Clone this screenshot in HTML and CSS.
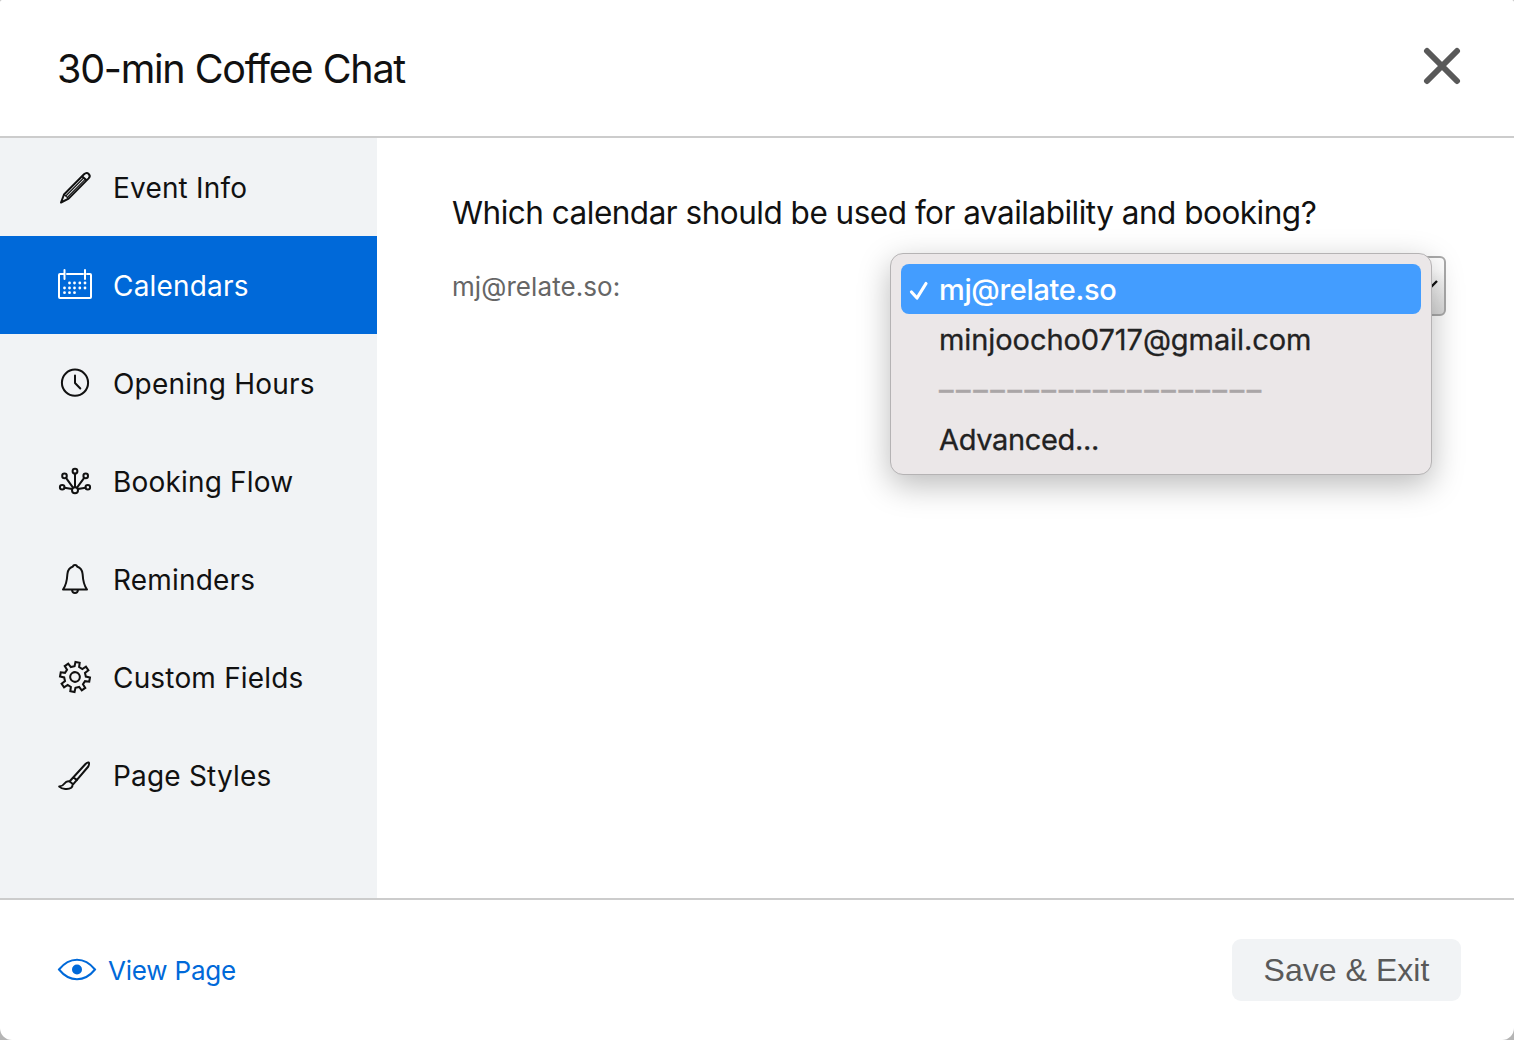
FILE: index.html
```html
<!DOCTYPE html>
<html lang="en">
<head>
<meta charset="utf-8">
<title>30-min Coffee Chat</title>
<link rel="stylesheet" href="styles.css">
</head>
<body>
<div class="dialog">
  <header class="header">
    <h1 class="title">30-min Coffee Chat</h1>
    <button class="close" aria-label="Close"><svg width="38" height="38" viewBox="0 0 38 38"><path d="M4 4L34 34M34 4L4 34"/></svg></button>
  </header>
  <div class="body">
    <nav class="nav">
      <a class="item"><svg class="icon" viewBox="0 0 36 36"><path d="M4 33.500L7 25.500L27 5.300C28.500 3.900 30.200 3.500 31.700 4.900S33 7.900 31.600 9.400L11.600 29.600Z M25 7.300L29.600 11.300"/><path class="fine" d="M7 25.500L11.600 29.600M8.800 27L26.600 9M10.300 28.500L28.200 10.400"/></svg><span>Event Info</span></a>
      <a class="item active"><svg class="icon" viewBox="0 0 36 36"><path d="M7 7H3Q2 7 2 8V30Q2 31 3 31H33Q34 31 34 30V8Q34 7 33 7H30M10 7H26M7.500 3V12M28 3V12"/><path class="dots" d="M12.500 16h.01M17.500 16h.01M22.800 16h.01M28 16h.01M7.500 21h.01M12.500 21h.01M17.500 21h.01M22.800 21h.01M28 21h.01M7.500 25.700h.01M12.500 25.700h.01M17.500 25.700h.01"/></svg><span>Calendars</span></a>
      <a class="item"><svg class="icon" viewBox="0 0 36 36"><circle cx="18" cy="17.700" r="13.100"/><path d="M18 10.500V18L23.300 23.500"/></svg><span>Opening Hours</span></a>
      <a class="item"><svg class="icon" viewBox="0 0 36 36"><circle cx="18" cy="8.200" r="2.400"/><circle cx="7.500" cy="12.900" r="2.300"/><circle cx="28.700" cy="12.900" r="2.300"/><circle cx="5.200" cy="24.300" r="2.300"/><circle cx="30.800" cy="24.300" r="2.300"/><circle cx="18" cy="27.200" r="3"/><path d="M18 10.700V24.200M9 14.900L16 24.700M27.200 14.900L20 24.700M7.500 24.700L15 26.100M28.500 24.700L21 26.100"/></svg><span>Booking Flow</span></a>
      <a class="item"><svg class="icon" viewBox="0 0 36 36"><path d="M16 5.500Q16 4 18 4T20 5.500Q25 7 25.600 13C26 20 26.500 24 30 28.500H6C9.500 24 10 20 10.400 13Q11 7 16 5.500ZM15 29Q15.300 32 18 32T21 29"/></svg><span>Reminders</span></a>
      <a class="item"><svg class="icon gear" viewBox="0 0 36 36"><g transform="translate(18 18) rotate(10) scale(.97)"><circle r="5"/><path d="M-2.400 -10.900L-2.200 -15.300H2.200L2.400 -10.900L6 -9.400L9.260 -12.370L12.370 -9.260L9.400 -6L10.900 -2.400L15.300 -2.200V2.200L10.900 2.400L9.400 6L12.370 9.260L9.260 12.370L6 9.400L2.400 10.900L2.200 15.300H-2.200L-2.400 10.900L-6 9.400L-9.260 12.370L-12.370 9.260L-9.400 6L-10.900 2.400L-15.300 2.200V-2.200L-10.900 -2.400L-9.400 -6L-12.370 -9.260L-9.260 -12.370L-6 -9.400Z"/></g></svg><span>Custom Fields</span></a>
      <a class="item"><svg class="icon" viewBox="0 0 36 36"><path d="M12.500 24.500L28.500 7Q30.500 5 31.600 5.500T31.300 9.500L16.300 27.200ZM16.500 20.400L20 23.200M12.500 24.500Q9.500 23.700 7.500 26.500T2.200 29.600C5 32.300 11.500 32.800 14.200 30.800Q15.800 29.300 15.600 26.900"/></svg><span>Page Styles</span></a>
    </nav>
    <main class="main">
      <h2 class="question">Which calendar should be used for availability and booking?</h2>
      <div class="row">
        <label class="label">mj@relate.so:</label>
        <div class="select">
          <svg class="caret" width="22" height="14" viewBox="0 0 22 14"><path d="M2 2L11 11L20 2"/></svg>
          <div class="menu">
            <div class="option chosen"><svg class="check" width="22" height="22" viewBox="0 0 22 22"><path d="M3.500 12L9 18L18 3.500"/></svg><span>mj@relate.so</span></div>
            <div class="option"><span>minjoocho0717@gmail.com</span></div>
            <div class="option rule"><span>–––––––––––––––––––</span></div>
            <div class="option advanced"><span>Advanced...</span></div>
          </div>
        </div>
      </div>
    </main>
  </div>
  <footer class="footer">
    <a class="view"><svg width="40" height="24" viewBox="0 0 40 24"><path d="M2 11.500Q10 1.800 20 1.800T38 11.500Q30 21.300 20 21.300T2 11.500Z"/><circle cx="20" cy="11.500" r="5"/></svg><span>View Page</span></a>
    <button class="save">Save &amp; Exit</button>
  </footer>
</div>
</body>
</html>
```
FILE: styles.css
```css
* { box-sizing: border-box; }
body { margin: 0; background: #b5b5b5; font-family: Inter, "Liberation Sans", sans-serif; color: #111; }
svg { display: block; flex: none; fill: none; }
.dialog { width: 1514px; height: 1040px; background: #fff; border-radius: 2px 2px 12px 12px; overflow: hidden; display: flex; flex-direction: column; }
.header { height: 138px; border-bottom: 2px solid #ccc; padding: 0 53px 0 57px; display: flex; justify-content: space-between; align-items: center; }
.title { margin: 0; padding-top: 1px; font-size: 39.5px; font-weight: 400; line-height: 48px; letter-spacing: -1.26px; word-spacing: .5px; white-space: nowrap; }
.close { border: 0; background: none; padding: 0; margin-top: -5px; }
.close path { stroke: #595959; stroke-width: 6; stroke-linecap: round; }
.body { flex: 1; display: flex; }
.nav { width: 377px; background: #f1f3f5; }
.item { height: 98px; padding: 2px 57px 0; display: flex; align-items: center; gap: 20px; font-size: 28px; line-height: 34px; letter-spacing: .18px; white-space: nowrap; }
.item.active { background: #0069d9; color: #fff; }
.icon { width: 36px; height: 36px; margin-top: -2px; stroke: currentColor; stroke-width: 2; stroke-linejoin: round; stroke-linecap: round; }
.gear { stroke-linejoin: miter; stroke-width: 2.1; }
.fine { stroke-width: 1.1; }
.dots { stroke-width: 2.8; }
.main { flex: 1; padding: 54px 68px 0 75px; }
.question { margin: 0; padding-top: 1px; font-size: 31.5px; font-weight: 400; line-height: 40px; letter-spacing: -.5px; white-space: nowrap; }
.row { margin-top: 23px; height: 60px; display: flex; justify-content: space-between; align-items: center; }
.label { font-size: 26px; color: #666; white-space: nowrap; letter-spacing: .08px; }
.select { width: 552px; height: 60px; position: relative; border: 2px solid #aaa; border-radius: 6px; background: linear-gradient(#fff 20%, #d9d9d9); display: flex; align-items: center; justify-content: flex-end; padding-right: 5px; }
.caret path { stroke: #111; stroke-width: 2.4; }
.menu { position: absolute; left: -6px; top: -5px; width: 542px; height: 222px; border: 1px solid #b5b3b4; border-radius: 13px; background: #ebe7e8; padding: 10px; box-shadow: 0 10px 32px rgba(0,0,0,.27); }
.option { height: 50px; padding-left: 38px; display: flex; align-items: center; font-size: 29px; font-weight: 400; -webkit-text-stroke: .3px currentColor; letter-spacing: -.07px; color: #222; border-radius: 8px; white-space: nowrap; }
.option.chosen { background: #439dff; color: #fff; padding-left: 7px; gap: 9px; font-weight: 500; letter-spacing: -.35px; -webkit-text-stroke: 0; }
.option.advanced { letter-spacing: -.35px; }
.check { margin-top: 3px; }
.check path { stroke: #fff; stroke-width: 3.2; stroke-linecap: round; stroke-linejoin: round; }
.option.rule { color: #aaa6a7; letter-spacing: 2.6px; font-weight: 500; }
.footer { height: 142px; border-top: 2px solid #ccc; padding: 0 53px 0 57px; display: flex; justify-content: space-between; align-items: center; }
.view { display: flex; align-items: center; gap: 11px; color: #0069d9; font-size: 26px; letter-spacing: -.2px; }
.view path { stroke: #0069d9; stroke-width: 2; }
.view circle { fill: #0069d9; }
.save { width: 229px; height: 62px; border: 0; border-radius: 9px; background: #f1f3f5; color: #595959; font: 32px "Liberation Sans", Arial, sans-serif; letter-spacing: .05px; padding: 0; }
```
